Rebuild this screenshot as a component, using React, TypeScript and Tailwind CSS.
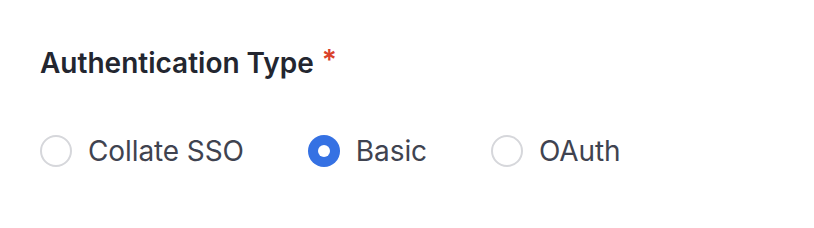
import { useState } from 'react'

const options = ['Collate SSO', 'Basic', 'OAuth']

export default function App() {
    const [selected, setSelected] = useState('Basic')

    return (
        <div className="w-[814px] h-[228px] bg-white px-10 pt-[46px] font-['Inter',sans-serif]">
            <h2 className="flex items-start text-[28px] leading-[34px] font-semibold text-[#232630]">
                Authentication Type
                <span className="ml-[8px] text-[#d9412b] leading-[28px]">*</span>
            </h2>

            <div className="mt-[54px] flex items-center">
                {options.map((opt) => {
                    const active = opt === selected
                    return (
                        <label
                            key={opt}
                            onClick={() => setSelected(opt)}
                            className="flex items-center mr-[64px] cursor-pointer"
                        >
                            {active ? (
                                <span className="w-8 h-8 rounded-full bg-[#3571e3] flex items-center justify-center">
                                    <span className="w-3 h-3 rounded-full bg-white"></span>
                                </span>
                            ) : (
                                <span className="w-8 h-8 rounded-full border-2 border-[#d6d7db] bg-white"></span>
                            )}
                            <span className="ml-4 text-[28px] leading-[34px] tracking-[-0.1px] text-[#3f4350]">{opt}</span>
                        </label>
                    )
                })}
            </div>
        </div>
    )
}
